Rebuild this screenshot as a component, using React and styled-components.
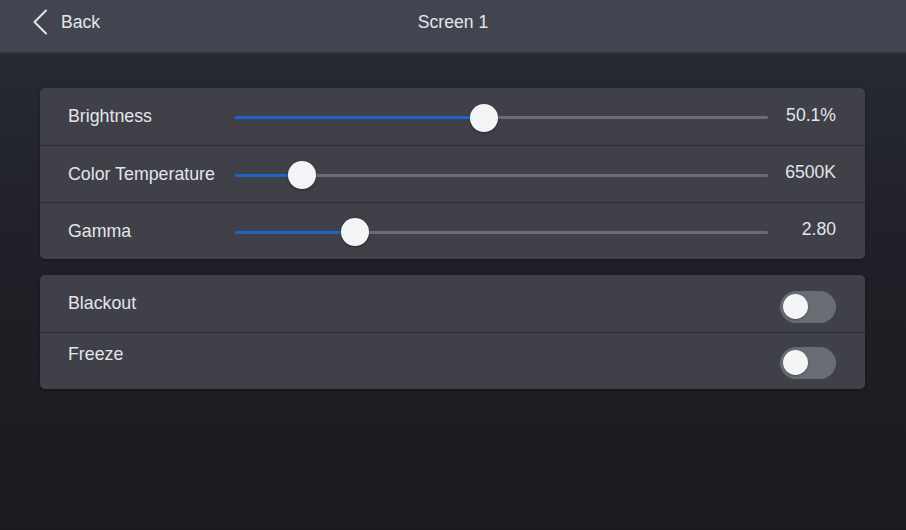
import React from "react";
import styled, { createGlobalStyle } from "styled-components";

const GlobalStyle = createGlobalStyle`
  html, body {
    margin: 0;
    padding: 0;
    background: #1b1c21;
  }
  body {
    font-family: "Liberation Sans", Arial, sans-serif;
    -webkit-font-smoothing: antialiased;
  }
`;

const Page = styled.div`
  min-height: 530px;
  background: linear-gradient(180deg, #292b34 0%, #202128 45%, #1a1b1f 100%);
`;

const Header = styled.header`
  height: 52px;
  display: grid;
  grid-template-columns: 1fr auto 1fr;
  align-items: center;
  background: #42454f;
  box-shadow: 0 2px 0 #30323b;
`;

const BackButton = styled.button`
  justify-self: start;
  display: flex;
  align-items: center;
  gap: 13px;
  margin-left: 32px;
  margin-top: -8px;
  padding: 0;
  border: none;
  background: none;
  color: #e4e5e8;
  font-family: inherit;
  font-size: 17.6px;
  cursor: pointer;
`;

const Title = styled.h1`
  margin: -8px 0 0;
  font-size: 17.6px;
  font-weight: 400;
  color: #e4e5e8;
`;

const Content = styled.main`
  display: flex;
  flex-direction: column;
  gap: 16px;
  padding: 36px 41px 0 40px;
`;

const Card = styled.section`
  background: #3f4048;
  border-radius: 5px;
  box-shadow: 0 1px 3px rgba(0, 0, 0, 0.35);
  overflow: hidden;
`;

const SliderRow = styled.div`
  box-sizing: border-box;
  height: 57px;
  display: grid;
  grid-template-columns: 167px 1fr 68px;
  align-items: center;
  padding: 0 29px 0 28px;

  & + & {
    border-top: 1px solid #2d2f36;
  }
`;

const Label = styled.span`
  font-size: 17.8px;
  color: #e4e5e8;
  margin-top: ${(p) => (p.$raised ? "-13px" : "0")};
`;

const Value = styled.span`
  justify-self: end;
  font-size: 17.6px;
  color: #e4e5e8;
  margin-top: -3px;
`;

const Track = styled.div`
  position: relative;
  height: 3px;
  margin-top: 2px;
  background: #6c6d73;
  border-radius: 2px;
`;

const Fill = styled.div`
  height: 100%;
  background: #1f64c7;
  border-radius: 2px;
`;

const Thumb = styled.div`
  position: absolute;
  top: 50%;
  width: 28px;
  height: 28px;
  border-radius: 50%;
  background: #f3f4f6;
  box-shadow: 0 1px 3px rgba(0, 0, 0, 0.35);
  transform: translate(-50%, -50%);
`;

const ToggleRow = styled.div`
  box-sizing: border-box;
  height: 57px;
  display: flex;
  align-items: center;
  justify-content: space-between;
  padding: 0 29px 0 28px;

  & + & {
    border-top: 1px solid #2d2f36;
  }
`;

const Switch = styled.div`
  width: 56px;
  height: 32px;
  border-radius: 16px;
  background: ${(p) => (p.$on ? "#1f64c7" : "#6a6c73")};
  display: flex;
  align-items: center;
  justify-content: ${(p) => (p.$on ? "flex-end" : "flex-start")};
  padding: 0 3px;
  box-sizing: border-box;
  margin-top: ${(p) => p.$offset || 0}px;
`;

const Knob = styled.div`
  width: 25px;
  height: 25px;
  border-radius: 50%;
  background: #f4f5f7;
  box-shadow: 0 1px 2px rgba(0, 0, 0, 0.3);
`;

const sliders = [
  { label: "Brightness", value: "50.1%", pct: 46.7 },
  { label: "Color Temperature", value: "6500K", pct: 12.6 },
  { label: "Gamma", value: "2.80", pct: 22.5 },
];

function Slider({ pct }) {
  return (
    <Track>
      <Fill style={{ width: `${pct}%` }} />
      <Thumb style={{ left: `${pct}%` }} />
    </Track>
  );
}

export default function App() {
  return (
    <Page>
      <GlobalStyle />
      <Header>
        <BackButton>
          <svg width="16" height="26" viewBox="0 0 16 26" fill="none">
            <path
              d="M14 1.5 L2.5 13 L14 24.5"
              stroke="#e4e5e8"
              strokeWidth="2"
              strokeLinecap="round"
              strokeLinejoin="round"
            />
          </svg>
          Back
        </BackButton>
        <Title>Screen 1</Title>
        <div />
      </Header>

      <Content>
        <Card>
          {sliders.map((s) => (
            <SliderRow key={s.label}>
              <Label>{s.label}</Label>
              <Slider pct={s.pct} />
              <Value>{s.value}</Value>
            </SliderRow>
          ))}
        </Card>

        <Card>
          <ToggleRow>
            <Label>Blackout</Label>
            <Switch $offset={6}>
              <Knob />
            </Switch>
          </ToggleRow>
          <ToggleRow>
            <Label $raised>Freeze</Label>
            <Switch $offset={3}>
              <Knob />
            </Switch>
          </ToggleRow>
        </Card>
      </Content>
    </Page>
  );
}
